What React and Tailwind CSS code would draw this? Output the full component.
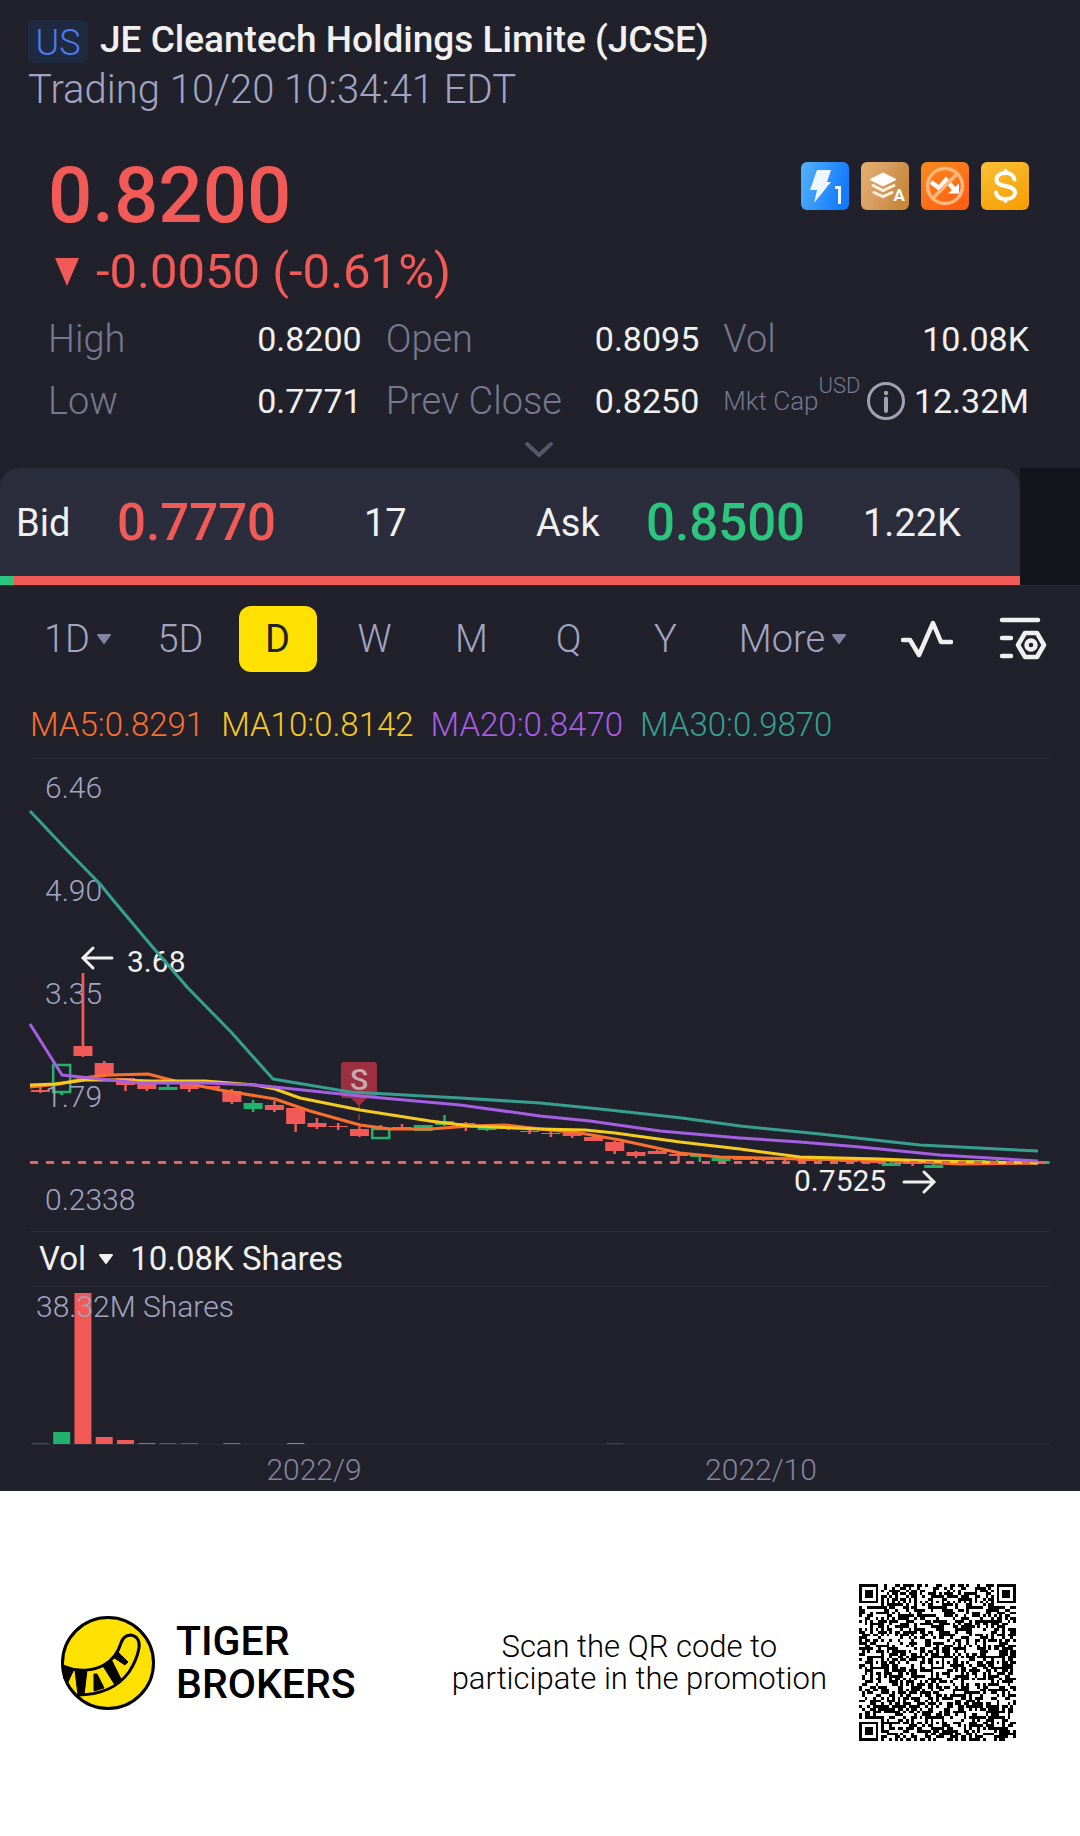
import React, { useState } from "react";

const RED = "#f25a57";
const GREEN = "#21b36c";

// [body top, body bottom, high, low, type] in chart units
const candles = [
  [1090, 1092, 1087, 1093, "red"],
  [1065, 1092, 1065, 1095, "hollow"],
  [1046, 1056, 973, 1057, "red"],
  [1063, 1075, 1061, 1075, "red"],
  [1078, 1085, 1078, 1091, "red"],
  [1084, 1089, 1084, 1091, "red"],
  [1087, 1090, 1084, 1090, "green"],
  [1084, 1089, 1084, 1092, "red"],
  [1086, 1088, 1086, 1088, "red"],
  [1091, 1102, 1089, 1104, "red"],
  [1103, 1109, 1100, 1112, "green"],
  [1105, 1110, 1101, 1112, "red"],
  [1108, 1124, 1108, 1132, "red"],
  [1123, 1127, 1118, 1129, "red"],
  [1126, 1127, 1123, 1130, "red"],
  [1129, 1136, 1126, 1137, "red"],
  [1129, 1138, 1125, 1138, "hollow"],
  [1127, 1129, 1124, 1129, "red"],
  [1125, 1131, 1125, 1131, "green"],
  [1121, 1125, 1115, 1126, "green"],
  [1123, 1126, 1122, 1131, "red"],
  [1127, 1130, 1125, 1131, "green"],
  [1127, 1129, 1127, 1130, "green"],
  [1131, 1132, 1129, 1134, "red"],
  [1133, 1134, 1130, 1137, "red"],
  [1133, 1136, 1133, 1138, "red"],
  [1137, 1141, 1136, 1141, "red"],
  [1142, 1151, 1141, 1154, "red"],
  [1152, 1156, 1151, 1158, "red"],
  [1151, 1154, 1150, 1154, "red"],
  [1154, 1156, 1154, 1163, "red"],
  [1155, 1157, 1155, 1162, "green"],
  [1158, 1161, 1156, 1161, "green"],
  [1158, 1160, 1158, 1160, "red"],
  [1159, 1160, 1158, 1161, "red"],
  [1159, 1160, 1158, 1161, "red"],
  [1159, 1161, 1159, 1161, "red"],
  [1160, 1161, 1159, 1161, "green"],
  [1160, 1162, 1160, 1162, "red"],
  [1161, 1163, 1160, 1163, "red"],
  [1163, 1166, 1162, 1166, "green"],
  [1162, 1164, 1161, 1166, "red"],
  [1165, 1168, 1163, 1168, "green"],
  [1163, 1165, 1162, 1165, "red"],
  [1160, 1163, 1160, 1165, "green"],
  [1161, 1164, 1160, 1164, "green"],
  [1161, 1163, 1160, 1163, "red"],
  [1161, 1164, 1161, 1164, "green"],
];

const volumes = [
  [0, 1, RED, 0.4],
  [1, 12, GREEN, 1],
  [2, 151, RED, 1],
  [3, 7, RED, 1],
  [4, 4, RED, 1],
  [5, 1, RED, 0.9],
  [6, 1, GREEN, 0.6],
  [7, 1, RED, 0.6],
  [9, 1, RED, 0.8],
  [12, 1, RED, 1],
  [27, 1, RED, 0.3],
];

const maLines = [
  {
    color: "#fb6f2c",
    points:
      "30,1087 60,1084 90,1077 110,1075 148,1074 175,1081 220,1090 275,1099 310,1111 360,1125 390,1129 430,1129 470,1126 505,1125 540,1129 580,1133 620,1140 680,1153 720,1157 800,1159 880,1160 960,1164 1038,1163",
  },
  {
    color: "#f7cb1d",
    points:
      "30,1085 55,1084 85,1080 120,1080 150,1081 205,1081 255,1085 275,1089 300,1098 360,1110 430,1121 470,1126 540,1129 585,1130 615,1133 680,1142 740,1149 800,1157 880,1159 930,1161 1038,1163",
  },
  {
    color: "#a65ee2",
    points:
      "30,1024 62,1075 90,1078 140,1083 206,1083 255,1085 360,1096 460,1105 540,1116 590,1121 660,1131 740,1138 800,1142 860,1147 940,1155 1038,1161",
  },
  {
    color: "#36a090",
    points:
      "30,811 62,845 100,884 113,900 150,944 187,987 231,1032 273,1079 350,1092 460,1098 540,1103 600,1109 682,1118 740,1126 820,1134 920,1145 1038,1151",
  },
];

const averages = [
  { text: "MA5:0.8291", color: "text-[#fb6f2c]" },
  { text: "MA10:0.8142", color: "text-[#f7cb1d]" },
  { text: "MA20:0.8470", color: "text-[#a65ee2]" },
  { text: "MA30:0.9870", color: "text-[#36a090]" },
];

const axisLabels = [
  ["6.46", 798],
  ["4.90", 901],
  ["3.35", 1004],
  ["1.79", 1107],
  ["0.2338", 1210],
];

const periods = ["1D", "5D", "D", "W", "M", "Q", "Y", "More"];

const candleX = (i) => 40.4 + i * 21.27;

const Caret = ({ className }) => (
  <svg viewBox="0 0 16 12" className={className} aria-hidden="true">
    <path d="M2 1h12a1 1 0 0 1 .8 1.6l-6 8a1 1 0 0 1-1.6 0l-6-8A1 1 0 0 1 2 1z" fill="currentColor" />
  </svg>
);

const Badges = () => (
  <div className="flex gap-3">
    <svg viewBox="0 0 48 48" className="size-12">
      <defs>
        <linearGradient id="blue" x1="0" y1="0" x2="1" y2="0.3">
          <stop offset="0" stopColor="#55b3fb" />
          <stop offset="1" stopColor="#147bfd" />
        </linearGradient>
      </defs>
      <rect width="48" height="48" rx="6" fill="url(#blue)" />
      <path d="M16 8h14l-4 12h4L13 41l3-13H9z" fill="#eef7ff" />
      <path d="M34 25.500h4.500V42" fill="none" stroke="#eef7ff" strokeWidth="3" />
    </svg>
    <svg viewBox="0 0 48 48" className="size-12">
      <defs>
        <linearGradient id="bronze" x1="0" y1="0" x2="1" y2="0.4">
          <stop offset="0" stopColor="#e7b06d" />
          <stop offset="0.5" stopColor="#d79d62" />
          <stop offset="1" stopColor="#c8893c" />
        </linearGradient>
      </defs>
      <rect width="48" height="48" rx="6" fill="url(#bronze)" />
      <path d="M22 11l13 6.500-13 6.500L9 17.500z" fill="#fff" stroke="#fff" strokeLinejoin="round" />
      <path d="M12 23.500l10 5 11-5M13 30.500l9 4 9-4" fill="none" stroke="#fff3e0" strokeWidth="3" strokeLinecap="round" />
      <text x="32.500" y="39" fontSize="17" fontWeight="700" fill="#fff">A</text>
    </svg>
    <svg viewBox="0 0 48 48" className="size-12">
      <defs>
        <linearGradient id="orange" x1="0" y1="0" x2="0.6" y2="1">
          <stop offset="0" stopColor="#fb8b1e" />
          <stop offset="1" stopColor="#ff6114" />
        </linearGradient>
      </defs>
      <rect width="48" height="48" rx="6" fill="url(#orange)" />
      <path d="M10 20l8 6 7-8 8 9" fill="none" stroke="#fff" strokeWidth="4.500" />
      <path d="M27 31.500l11-10v10z" fill="#fff" />
      <circle cx="24" cy="24" r="17.500" fill="none" stroke="#ffb87c" strokeWidth="3.500" />
      <path d="M12 36l24-24" stroke="#ffb87c" strokeWidth="3.500" />
    </svg>
    <svg viewBox="0 0 48 48" className="size-12">
      <defs>
        <linearGradient id="gold" x1="0.2" y1="0" x2="0.7" y2="1">
          <stop offset="0" stopColor="#f9bd33" />
          <stop offset="1" stopColor="#f7a004" />
        </linearGradient>
      </defs>
      <rect width="48" height="48" rx="6" fill="url(#gold)" />
      <path
        d="M33.500 17.500c-.5-4-4-6.500-9-6.500-5.500 0-9 2.500-9 6.500 0 4.500 4 5.500 9 6.500s9.500 2 9.500 6.500c0 4-4 6.500-9.500 6.500s-9-2.500-9.500-6.500M24.500 9v2M24.500 37v2"
        fill="none"
        stroke="#fff"
        strokeWidth="4"
        strokeLinecap="round"
      />
    </svg>
  </div>
);

const Stat = ({ label, value }) => (
  <div className="flex justify-between">
    <dt className="text-[#75788f]">{label}</dt>
    <dd className="text-[34px] font-normal text-[#f0f0f0]">{value}</dd>
  </div>
);

const Quote = () => (
  <section className="pl-12 pr-[51px] pt-11">
    <div className="flex justify-between items-start">
      <p className="text-[78px] leading-20 font-medium text-[#f25a57]">0.8200</p>
      <div className="pt-1.5">
        <Badges />
      </div>
    </div>
    <p className="flex items-center gap-4 pl-1.5 text-[49px] leading-[72px] text-[#f25a57]">
      <svg viewBox="0 0 26 28" className="w-[26px] h-7" aria-hidden="true">
        <path d="M1 0h24L13 28z" fill="currentColor" />
      </svg>
      -0.0050 (-0.61%)
    </p>
    <dl className="grid grid-cols-[314fr_314fr_306fr] gap-x-6 text-[38px] leading-[62px] font-light">
      <Stat label="High" value="0.8200" />
      <Stat label="Open" value="0.8095" />
      <Stat label="Vol" value="10.08K" />
      <Stat label="Low" value="0.7771" />
      <Stat label="Prev Close" value="0.8250" />
      <div className="flex justify-between items-center whitespace-nowrap">
        <dt className="flex items-center text-[26px] text-[#75788f]">
          Mkt Cap
          <span className="self-start text-[22px] leading-8">USD</span>
          <svg viewBox="0 0 40 40" className="size-10 ml-1.5" aria-hidden="true">
            <circle cx="20" cy="20" r="17.500" fill="none" stroke="#a0a2b1" strokeWidth="3" />
            <circle cx="20" cy="12" r="2.200" fill="#a0a2b1" />
            <path d="M20 17.500V30" stroke="#a0a2b1" strokeWidth="4" strokeLinecap="round" />
          </svg>
        </dt>
        <dd className="text-[34px] font-normal text-[#f0f0f0]">12.32M</dd>
      </div>
    </dl>
    <button className="flex h-9 w-full items-center justify-center" aria-label="Expand">
      <svg viewBox="0 0 30 18" className="w-[30px] h-[18px]">
        <path d="M3 3l12 11L27 3" fill="none" stroke="#56586a" strokeWidth="4" strokeLinecap="round" />
      </svg>
    </button>
  </section>
);

const BidAsk = () => (
  <section className="bg-[#14141c] border-b border-[#2c2d3a] pr-[60px]">
    <div className="bg-[#21212b]">
      <div className="bg-[#2c2d3c] rounded-t-[20px]">
        <div className="grid grid-cols-[101fr_247fr_172fr_110fr_217fr_157fr] items-center h-27 pl-4 pt-0.5 text-[38px] text-[#f0f0f0]">
          <span>Bid</span>
          <span className="text-[51px] font-medium text-[#f25a57]">0.7770</span>
          <span>17</span>
          <span>Ask</span>
          <span className="text-[51px] font-medium text-[#2bc57e]">0.8500</span>
          <span>1.22K</span>
        </div>
        <div className="flex h-[9px] bg-[#f25a57]">
          <div className="w-[14px] bg-[#2bc57e]" />
        </div>
      </div>
    </div>
  </section>
);

const PeriodTabs = () => {
  const [active, setActive] = useState("D");

  return (
    <nav className="grid grid-cols-[108fr_repeat(6,97fr)_158fr_110fr_82fr] justify-items-center pt-5 pl-6 pr-4 text-[38px] font-light text-[#a1a5c3]">
      {periods.map((p) => (
        <button
          key={p}
          onClick={() => setActive(p)}
          className={`flex items-center justify-center gap-1.5 h-[66px] min-w-[78px] rounded-xl ${
            active === p ? "bg-[#ffe100] text-[#21212b] font-normal" : ""
          }`}
        >
          {p}
          {(p === "1D" || p === "More") && <Caret className="w-4 h-3 text-[#8285a0]" />}
        </button>
      ))}
      <button aria-label="Line chart">
        <svg viewBox="0 0 52 38" className="w-[52px] h-[38px]">
          <path
            d="M2 20h7l9 15L32 3l8 19h10"
            fill="none"
            stroke="#f0f0f0"
            strokeWidth="4.500"
            strokeLinecap="round"
            strokeLinejoin="round"
          />
        </svg>
      </button>
      <button aria-label="Indicator settings">
        <svg viewBox="0 0 48 44" className="w-12 h-11" fill="none" stroke="#f0f0f0" strokeWidth="4.500" strokeLinecap="round" strokeLinejoin="round">
          <path d="M3 3h36M3 21h9M3 39h9" />
          <path d="M26 16h12l7 12-7 12H26l-7-12z" />
          <circle cx="32" cy="28" r="4.500" />
        </svg>
      </button>
    </nav>
  );
};

const PriceChart = () => (
  <svg viewBox="0 758 1080 474" className="block w-full" fontSize="30" role="img" aria-label="Daily price chart">
    <path d="M30 758.500h1019M30 1231.500h1019" stroke="#2c2d3a" />
    {candles.map(([top, bottom, high, low, type], i) => {
      const color = type === "red" ? RED : GREEN;
      const x = candleX(i);
      return (
        <g key={i} stroke={color} fill={color}>
          {type === "hollow" ? (
            <>
              <path d={`M${x} ${high}V${top}M${x} ${bottom}V${low}`} strokeWidth="3" />
              <rect x={x - 8.5} y={top} width="17" height={bottom - top} fill="none" strokeWidth="2.500" />
            </>
          ) : (
            <>
              <path d={`M${x} ${high}V${low}`} strokeWidth="2.500" />
              <rect x={x - 9.5} y={top} width="19" height={bottom - top} stroke="none" />
            </>
          )}
        </g>
      );
    })}
    <g fill="#a1a5c3" fontWeight="300">
      {axisLabels.map(([label, y]) => (
        <text key={label} x="45" y={y}>
          {label}
        </text>
      ))}
    </g>
    <path d="M83 973v73" stroke={RED} strokeWidth="2.500" opacity="0.800" />
    <g fill="#f0f0f0">
      <text x="127" y="972">3.68</text>
      <text x="794" y="1191">0.7525</text>
    </g>
    <g stroke="#f0f0f0" strokeWidth="3" fill="none" strokeLinecap="round">
      <path d="M112 958H84M93 948l-10 10 10 10" />
      <path d="M904 1182h29M924 1172l10 10-10 10" />
    </g>
    <path d="M359 1105v22" stroke="#a03343" strokeWidth="1.500" strokeDasharray="6 3" />
    <path d="M344 1062h30a3 3 0 0 1 3 3v30a3 3 0 0 1-3 3h-7l-8 8-8-8h-7a3 3 0 0 1-3-3v-30a3 3 0 0 1 3-3z" fill="#9c2f40" />
    <text x="359" y="1090" textAnchor="middle" fontSize="30" fontWeight="500" fill="#c7a9b0">
      S
    </text>
    {maLines.map((line) => (
      <polyline key={line.color} points={line.points} fill="none" stroke={line.color} strokeWidth="3" strokeLinejoin="round" />
    ))}
    <path d="M30 1162.500h1019" stroke="#e8605f" strokeWidth="3" strokeDasharray="8 8" />
  </svg>
);

const Volume = () => (
  <>
    <div className="flex items-center gap-3 h-[54px] pl-[39px] text-[33px] text-[#f0f0f0]">
      <button className="flex items-center gap-3">
        Vol
        <Caret className="w-4 h-3" />
      </button>
      <span className="pl-1">10.08K Shares</span>
    </div>
    <svg viewBox="0 1286 1080 205" className="block w-full" fontSize="30" fontWeight="300" role="img" aria-label="Volume chart">
      <path d="M30 1286.500h1019M30 1444.500h1019" stroke="#2c2d3a" />
      {volumes.map(([i, h, color, opacity]) => (
        <rect key={i} x={candleX(i) - 8.5} y={1444 - h} width="17" height={h} fill={color} opacity={opacity} />
      ))}
      <text x="36" y="1317" fill="#a1a5c3">
        38.32M Shares
      </text>
      <g fill="#82859e" textAnchor="middle">
        <text x="314" y="1480">2022/9</text>
        <text x="761" y="1480">2022/10</text>
      </g>
    </svg>
  </>
);

const QR_SIZE = 57;

const finder = (x, y) => {
  const d = Math.max(Math.abs(x - 3), Math.abs(y - 3));
  return d > 4 ? null : d !== 2 && d !== 4;
};

const isDark = (x, y) => {
  const corners = [finder(x, y), finder(QR_SIZE - 1 - x, y), finder(x, QR_SIZE - 1 - y)];
  const hit = corners.find((c) => c !== null);
  if (hit !== undefined) return hit;

  // alignment marks
  for (const cx of [6, 28, 50]) {
    for (const cy of [6, 28, 50]) {
      const d = Math.max(Math.abs(x - cx), Math.abs(y - cy));
      if (d <= 2) return d !== 1;
    }
  }
  if (x === 6 || y === 6) return (x + y) % 2 === 0;

  let h = (x * 374761393 + y * 668265263) | 0;
  h = Math.imul(h ^ (h >>> 13), 1274126177);
  return ((h ^ (h >>> 16)) & 255) < 132;
};

const QrCode = () => {
  let d = "";
  for (let y = 0; y < QR_SIZE; y++) {
    for (let x = 0; x < QR_SIZE; x++) {
      if (isDark(x, y)) d += `M${x} ${y}h1v1h-1z`;
    }
  }
  return (
    <svg viewBox="0 0 57 57" className="size-[157px] shrink-0" shapeRendering="crispEdges" role="img" aria-label="QR code">
      <path d={d} fill="#000" />
    </svg>
  );
};

const TigerLogo = () => (
  <svg viewBox="0 0 96 96" className="size-24 shrink-0" aria-hidden="true">
    <circle cx="48" cy="48" r="45.500" fill="#ffe100" stroke="#000" strokeWidth="3" />
    <path
      d="M4 52c14 5 29 4 40-2 9-5 14-12 17-22 2-6 6-8 10-8 6 1 9 6 8 13-2 11-6 18-10 24-10 14-26 23-52 23"
      fill="none"
      stroke="#000"
      strokeWidth="3"
      strokeLinejoin="round"
    />
    <path
      d="M3 50l11 4-6 13-4-3zM15 55h12l-3 25h-6zM34 59h3l7 14-10 3zM43 51l9-5 9 18-6 6zM53 42l5-5 10 10-3 3z"
      fill="#000"
      stroke="#000"
      strokeLinejoin="round"
    />
  </svg>
);

const Footer = () => (
  <footer className="flex items-center justify-between pl-15 pr-16 pt-[93px] pb-[94px] bg-white text-black">
    <div className="flex items-center gap-5 text-[41px] leading-[43px] font-medium">
      <TigerLogo />
      <p>
        <span className="block">TIGER</span>
        <span className="block">BROKERS</span>
      </p>
    </div>
    <div className="flex items-center gap-8">
      <p className="text-center text-[31px] leading-8 font-light">
        <span className="block">Scan the QR code to</span>
        <span className="block">participate in the promotion</span>
      </p>
      <QrCode />
    </div>
  </footer>
);

const App = () => {
  return (
    <div className="min-h-screen bg-white font-[Roboto,sans-serif]">
      <main className="bg-[#21212b]">
        <header className="px-7 pt-4">
          <div className="flex items-start gap-3 h-12">
            <span className="mt-1 w-[60px] h-[43px] rounded-md bg-[#1f2a40] text-center text-[36px] leading-[46px] font-light text-[#4a7cf0]">
              US
            </span>
            <h1 className="text-[37px] leading-12 font-medium text-[#f0f0f0]">JE Cleantech Holdings Limite (JCSE)</h1>
          </div>
          <p className="text-[40px] leading-[52px] -mb-1 font-light text-[#a1a5c3]">Trading 10/20 10:34:41 EDT</p>
        </header>
        <Quote />
        <BidAsk />
        <PeriodTabs />
        <div className="flex gap-[17px] pt-7 pb-2 px-[30px] text-[33px] leading-[50px] font-light">
          {averages.map((a) => (
            <span key={a.text} className={a.color}>
              {a.text}
            </span>
          ))}
        </div>
        <PriceChart />
        <Volume />
      </main>
      <Footer />
    </div>
  );
};

export default App;
